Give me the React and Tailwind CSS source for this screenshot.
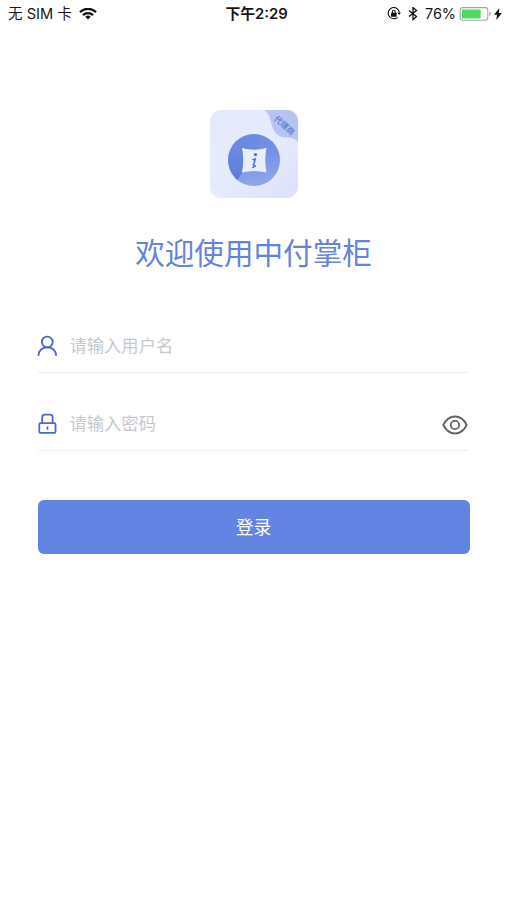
import { useState } from "react";

function WifiIcon() {
  return (
    <svg className="ml-[7px] h-3 w-[18px]" viewBox="0 0 18 12" fill="none" stroke="#111" strokeWidth="2.3">
      <path d="M1 4.1a11.5 11.5 0 0 1 16 0" />
      <path d="M4 7.2a7.2 7.2 0 0 1 10 0" />
      <path d="M6.3 8.7a4 4 0 0 1 5.4 0L9 11.5z" fill="#111" stroke="none" />
    </svg>
  );
}

function RotationLockIcon() {
  return (
    <svg className="h-[14px] w-[14px]" viewBox="0 0 14 14" fill="none" stroke="#111" strokeWidth="1.1">
      <path d="M10.6 10.3a5.6 5.6 0 1 1 1.8-4.8" />
      <path d="M10.3 5.500h3.6l-1.8 2.6z" fill="#111" stroke="none" />
      <rect x="4" y="5.700" width="5.6" height="4" rx="0.5" fill="#111" stroke="none" />
      <path d="M5.4 5.900V4.700a1.4 1.4 0 0 1 2.8 0v1.2" />
    </svg>
  );
}

function BluetoothIcon() {
  return (
    <svg className="ml-[7px] h-[14px] w-[10px]" viewBox="0 0 10 14" fill="none" stroke="#111" strokeWidth="1.3">
      <path d="M1 3.500l7.5 6-3.500 3V.500L8.500 3.500 1 9.500" />
    </svg>
  );
}

function BatteryIcon() {
  return (
    <svg className="ml-[3px] h-[15px] w-[33px]" viewBox="0 0 33 15" fill="none">
      <rect x="1.2" y="0.6" width="27.6" height="12.6" rx="2.6" stroke="#a5a5a5" strokeWidth="1.1" />
      <rect x="3" y="2.4" width="18.7" height="9" rx="0.8" fill="#4cd964" />
      <path d="M30.3 4.8c2 .5 2 3.7 0 4.200z" fill="#a5a5a5" />
    </svg>
  );
}

function StatusBar() {
  return (
    <header className="grid h-7 grid-cols-3 items-center pl-2 pr-[5px] text-sm leading-7 text-[#161616]">
      <div className="flex items-center">
        <span className="text-[14.6px] whitespace-nowrap">无 SIM 卡</span>
        <WifiIcon />
      </div>
      <div className="pl-[3px] text-center text-[14.8px] font-semibold">下午2:29</div>
      <div className="flex items-center justify-end">
        <RotationLockIcon />
        <BluetoothIcon />
        <span className="ml-[7px] text-[14.4px]">76%</span>
        <BatteryIcon />
        <svg className="ml-[2px] h-3 w-2" viewBox="0 0 8 12" fill="#111">
          <path d="M5.4 0L0 6.7h3L2.3 12 8 5H4.8z" />
        </svg>
      </div>
    </header>
  );
}

function Logo() {
  return (
    <svg className="h-[88px] w-[88px] shrink-0" viewBox="0 0 88 88">
      <defs>
        <linearGradient id="tile" x1="0" y1="0" x2="1" y2="1">
          <stop offset="0" stopColor="#e3eafc" />
          <stop offset="0.5" stopColor="#e6ebfd" />
          <stop offset="1" stopColor="#dbe1fa" />
        </linearGradient>
        <linearGradient id="coin" x1="0" y1="0" x2="0.2" y2="1">
          <stop offset="0" stopColor="#6c8ae2" />
          <stop offset="0.5" stopColor="#7590e5" />
          <stop offset="1" stopColor="#8ea4ec" />
        </linearGradient>
        <linearGradient id="shade" x1="0" y1="0" x2="0" y2="1">
          <stop offset="0" stopColor="#5e7cdf" stopOpacity="0" />
          <stop offset="1" stopColor="#5472dc" />
        </linearGradient>
        <clipPath id="tileClip">
          <rect width="88" height="88" rx="11" />
        </clipPath>
        <clipPath id="coinClip">
          <circle cx="44" cy="50" r="26" />
        </clipPath>
      </defs>
      <g clipPath="url(#tileClip)">
        <rect width="88" height="88" fill="url(#tile)" />
        <path d="M54 0c5 3 5.5 7 7 12 2 9 6 15 14 15.5 6 .2 10 1 13 4V0z" fill="#b6c4f2" />
        <circle cx="44" cy="50" r="26" fill="url(#coin)" />
        <path d="M14 24H56L27 71H14z" fill="url(#shade)" opacity="0.9" clipPath="url(#coinClip)" />
        <path d="M32 38q12 3.500 24.500 0-2.500 12 0 24.500-12.500-3-24.500 0 2.500-12.500 0-24.500z" fill="#e9eefe" />
        <circle cx="45.500" cy="44.600" r="1.700" fill="#5576d8" />
        <path d="M41.300 49.300l5-1.500-1.800 7.600 2-.7-1.200 2.600-3.500.9 1.600-3.500-1.700.3 1.800-1.800.2-3z" fill="#5576d8" />
        <text x="74.300" y="18.200" transform="rotate(42 74.300 15.400)" textAnchor="middle" fontSize="8" fontWeight="700" fill="#6884dc">
          代理商
        </text>
      </g>
    </svg>
  );
}

function UserIcon() {
  return (
    <svg className="-ml-px mt-[3px] h-[22px] w-[22px] shrink-0" viewBox="0 0 22 22" fill="none" stroke="#4a68ce" strokeWidth="1.9">
      <circle cx="10.3" cy="7" r="5.4" />
      <path d="M1.500 20.800c0-5.300 3.800-8.600 8.800-8.600s8.800 3.300 8.800 8.600" />
    </svg>
  );
}

function LockIcon() {
  return (
    <svg className="-ml-px mt-[3px] h-[22px] w-[22px] shrink-0" viewBox="0 0 22 22" fill="none" stroke="#4a68ce" strokeWidth="1.8">
      <rect x="2.3" y="10.2" width="16.2" height="9.6" rx="1" />
      <path d="M5.2 10.2V4.2q0-2.500 2.500-2.500h5.400q2.500 0 2.500 2.500v6M10.400 13.500v3.300" />
    </svg>
  );
}

function EyeIcon() {
  return (
    <svg className="h-5 w-[26px]" viewBox="0 0 26 20" fill="none" stroke="#626262" strokeWidth="1.8">
      <path d="M1.300 10C4 4.500 8 1.500 13 1.500s9 3 11.700 8.500C22 15.500 18 18.500 13 18.500S4 15.500 1.300 10z" />
      <circle cx="13" cy="10" r="4.200" />
    </svg>
  );
}

const inputClass =
  "min-w-0 flex-1 bg-transparent pt-[3px] text-[17.3px] leading-6 text-gray-700 outline-none placeholder:text-[#c9c9cd]";

export default function App() {
  const [username, setUsername] = useState("");
  const [password, setPassword] = useState("");
  const [visible, setVisible] = useState(false);

  return (
    <div className="min-h-screen bg-white font-['Inter','Noto_Sans_CJK_SC',sans-serif]">
      <StatusBar />
      <main className="flex flex-col items-center pt-[82px]">
        <Logo />
        <h1 className="mt-[33px] text-[29.6px] leading-[44px] font-normal text-[#6383df]">欢迎使用中付掌柜</h1>

        <form className="mt-[42px] w-[432px]" onSubmit={(e) => e.preventDefault()}>
          <div className="mr-[2px] flex h-[56px] items-center border-b border-[#eeeeee]">
            <UserIcon />
            <input
              className={`ml-[11px] ${inputClass}`}
              placeholder="请输入用户名"
              value={username}
              onChange={(e) => setUsername(e.target.value)}
            />
          </div>
          <div className="mr-[2px] mt-[22px] flex h-[56px] items-center border-b border-[#eeeeee]">
            <LockIcon />
            <input
              className={`ml-[11px] ${inputClass}`}
              type={visible ? "text" : "password"}
              placeholder="请输入密码"
              value={password}
              onChange={(e) => setPassword(e.target.value)}
            />
            <button type="button" className="mt-[4px]" onClick={() => setVisible(!visible)}>
              <EyeIcon />
            </button>
          </div>
          <button type="submit" className="mt-[49px] h-[54px] w-full rounded-md bg-[#6283e1] pt-[2px] text-[17.8px] text-white">
            登录
          </button>
        </form>
      </main>
    </div>
  );
}
